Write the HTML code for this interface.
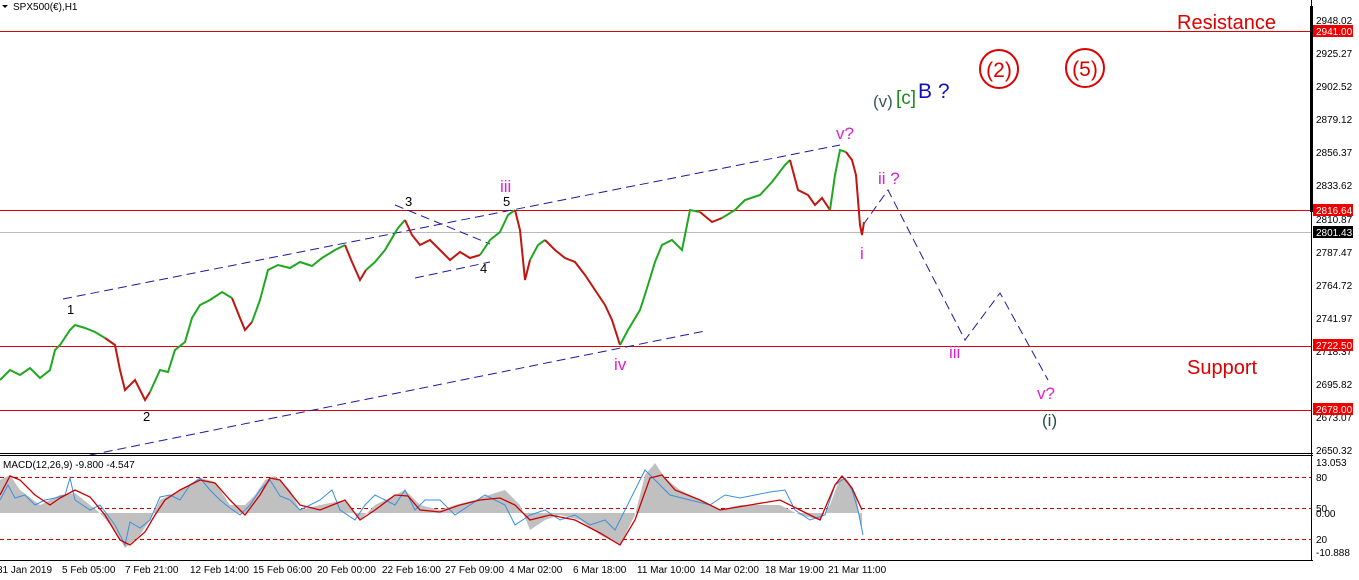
<!DOCTYPE html>
<html><head><meta charset="utf-8"><style>
html,body{margin:0;padding:0;background:#fff;width:1359px;height:580px;overflow:hidden}
svg{display:block;font-family:"Liberation Sans",sans-serif}
.ax{font-size:10px;fill:#000}
</style></head><body>
<svg width="1359" height="580" viewBox="0 0 1359 580">
<rect width="1359" height="580" fill="#fff"/>
<path d="M2 5 L8 5 L5 8 Z" fill="#000"/>
<text x="13" y="10" class="ax">SPX500(€),H1</text>
<line x1="0" y1="31.5" x2="1311" y2="31.5" stroke="#d00" stroke-width="1"/>
<line x1="0" y1="210.5" x2="1311" y2="210.5" stroke="#d00" stroke-width="1"/>
<line x1="0" y1="232.5" x2="1311" y2="232.5" stroke="#bbb" stroke-width="1"/>
<line x1="0" y1="346.5" x2="1311" y2="346.5" stroke="#d00" stroke-width="1"/>
<line x1="0" y1="410.5" x2="1311" y2="410.5" stroke="#d00" stroke-width="1"/>
<g stroke="#1a1aa0" stroke-width="1" stroke-dasharray="9,5" fill="none">
<line x1="63" y1="299" x2="840" y2="145"/>
<line x1="90" y1="455" x2="705" y2="331"/>
<line x1="395" y1="205" x2="490" y2="244"/>
<line x1="415" y1="278" x2="490" y2="262"/>
<polyline points="863,225 888,190 965,340 1000,293 1048,380"/>
</g>
<g fill="none" stroke-width="2">
<polyline stroke="#1fa81f" points="0,380 10,370 20,375 30,368 40,378 50,370 55,350 60,345 70,330 75,325 85,328 95,332 105,338"/>
<polyline stroke="#c0160f" points="105,338 115,345 120,370 125,390 135,380 145,400 150,392"/>
<polyline stroke="#1fa81f" points="150,392 160,370 168,372 175,350 185,342 192,318 200,305 210,300 222,292 232,298"/>
<polyline stroke="#c0160f" points="232,298 240,318 245,330 252,322"/>
<polyline stroke="#1fa81f" points="252,322 260,300 268,270 278,265 290,268 300,262 312,266 322,258 335,250 345,245"/>
<polyline stroke="#c0160f" points="345,245 352,262 360,280 366,270"/>
<polyline stroke="#1fa81f" points="366,270 375,262 385,250 398,228 405,220"/>
<polyline stroke="#c0160f" points="405,220 412,235 420,245 430,240 440,250 450,260 460,252 470,258 480,255"/>
<polyline stroke="#1fa81f" points="480,255 490,240 500,232 508,215 515,210"/>
<polyline stroke="#c0160f" points="515,210 520,230 525,280 530,260"/>
<polyline stroke="#1fa81f" points="530,260 538,245 545,240"/>
<polyline stroke="#c0160f" points="545,240 555,250 565,258 575,262 585,275 595,290 605,305 612,320 620,345"/>
<polyline stroke="#1fa81f" points="620,345 628,330 640,310 648,285 655,262 662,245 672,240 682,250 690,210 700,212"/>
<polyline stroke="#c0160f" points="700,212 712,222 722,218"/>
<polyline stroke="#1fa81f" points="722,218 735,210 745,200 760,195 772,182 785,165 790,160"/>
<polyline stroke="#c0160f" points="790,160 798,190 808,195 815,205 822,198 830,210"/>
<polyline stroke="#1fa81f" points="830,210 835,175 840,150 846,152"/>
<polyline stroke="#c0160f" points="846,152 852,160 856,175 858,200 860,225 862,235 864,222"/>
</g>
<g font-size="13" fill="#000">
<text x="67" y="314">1</text><text x="143" y="421">2</text><text x="405" y="206">3</text><text x="480" y="273">4</text><text x="503" y="206">5</text>
</g>
<g font-size="17" fill="#e020d0">
<text x="500" y="192">iii</text><text x="614" y="370">iv</text><text x="836" y="139">v?</text><text x="878" y="184">ii ?</text><text x="860" y="259">i</text><text x="949" y="358">iii</text><text x="1037" y="399">v?</text>
</g>
<text x="1042" y="426" font-size="17" fill="#2e4a4a">(i)</text>
<text x="873" y="107" font-size="17" fill="#3a5a5a">(v)</text>
<text x="896" y="104" font-size="19" fill="#1a8a1a">[c]</text>
<text x="918" y="98" font-size="21" fill="#1010c0">B ?</text>
<circle cx="999" cy="69" r="19" fill="none" stroke="#d00" stroke-width="2"/>
<text x="999" y="77" font-size="21" fill="#d00" text-anchor="middle">(2)</text>
<circle cx="1085" cy="68" r="19" fill="none" stroke="#d00" stroke-width="2"/>
<text x="1085" y="76" font-size="21" fill="#d00" text-anchor="middle">(5)</text>
<text x="1177" y="29" font-size="20" fill="#d00">Resistance</text>
<text x="1187" y="374" font-size="20" fill="#d00">Support</text>
<line x1="0" y1="453.5" x2="1313" y2="453.5" stroke="#000"/>
<line x1="0" y1="455.5" x2="1313" y2="455.5" stroke="#000"/>
<line x1="0" y1="560.5" x2="1313" y2="560.5" stroke="#000"/>
<line x1="1311.5" y1="0" x2="1311.5" y2="561" stroke="#000"/>
<rect x="1310" y="6" width="3" height="206" fill="#000"/>
<text x="3" y="468" class="ax">MACD(12,26,9) -9.800 -4.547</text>
<g stroke="#c00" stroke-dasharray="4,3" stroke-width="1">
<line x1="0" y1="477.5" x2="1311" y2="477.5"/><line x1="0" y1="508.5" x2="1311" y2="508.5"/><line x1="0" y1="539.5" x2="1311" y2="539.5"/>
</g>
<polygon fill="#c0c0c0" points="0,513 0,480 10,475 20,490 40,505 50,500 60,495 75,493 90,505 100,513 115,530 125,548 140,535 150,520 160,500 180,490 200,478 215,482 230,505 245,505 255,495 265,480 275,476 290,490 300,510 320,505 345,500 360,520 375,505 395,495 405,490 420,505 440,510 455,505 475,500 495,493 505,490 520,505 530,530 545,520 560,515 580,520 600,535 620,545 635,515 645,475 655,463 665,478 680,490 700,500 720,510 740,505 760,505 780,505 800,515 820,520 830,505 840,478 848,480 856,495 862,530 862,513"/>
<polyline fill="none" stroke="#3b8fe0" stroke-width="1" points="0,500 8,485 15,498 25,495 35,505 45,500 55,498 65,495 70,478 75,500 90,510 100,505 115,525 125,545 130,522 140,528 150,520 160,497 170,495 180,500 190,485 200,478 210,490 220,500 230,508 240,515 250,505 260,490 270,480 280,496 290,500 300,510 310,505 320,500 332,490 340,510 355,520 365,505 375,495 385,500 395,505 405,490 415,510 425,500 440,500 455,515 470,505 485,495 495,500 505,505 515,525 530,515 545,510 560,520 575,515 590,525 605,520 615,530 625,510 635,490 645,470 655,480 670,495 690,500 710,505 725,495 740,498 755,495 770,492 785,490 795,510 810,520 825,515 835,485 845,478 852,490 858,510 863,535"/>
<polyline fill="none" stroke="#c00" stroke-width="1.3" points="0,495 10,476 20,480 35,495 50,505 60,498 75,490 90,497 105,515 120,540 130,545 145,532 155,515 165,500 180,490 200,480 215,483 230,500 245,515 260,495 270,478 280,480 300,505 320,510 345,500 360,520 375,510 395,495 408,496 420,510 440,512 460,505 480,500 500,498 515,505 530,520 550,515 575,520 600,533 620,545 635,520 650,478 662,475 675,490 700,500 720,510 750,505 780,500 800,510 820,520 835,485 842,476 852,488 862,510"/>
<g class="ax">
<text x="1316" y="24">2948.02</text><text x="1316" y="57">2925.27</text><text x="1316" y="90">2902.52</text><text x="1316" y="123">2879.12</text><text x="1316" y="156">2856.37</text><text x="1316" y="189">2833.62</text><text x="1316" y="223">2810.87</text><text x="1316" y="256">2787.47</text><text x="1316" y="289">2764.72</text><text x="1316" y="322">2741.97</text><text x="1316" y="355">2718.37</text><text x="1316" y="388">2695.82</text><text x="1316" y="421">2673.07</text><text x="1316" y="454">2650.32</text>
<text x="1316" y="466">13.053</text><text x="1316" y="481">80</text><text x="1316" y="512">50</text><text x="1316" y="517">0.00</text><text x="1316" y="543">20</text><text x="1316" y="556">-10.888</text>
</g>
<rect x="1313" y="25" width="40" height="12" fill="#e00"/><text x="1316" y="35" class="ax" style="fill:#fff">2941.00</text>
<rect x="1313" y="204" width="40" height="12" fill="#e00"/><text x="1316" y="214" class="ax" style="fill:#fff">2816.64</text>
<rect x="1313" y="226" width="40" height="12" fill="#000"/><text x="1316" y="236" class="ax" style="fill:#fff">2801.43</text>
<rect x="1313" y="339" width="40" height="12" fill="#e00"/><text x="1316" y="349" class="ax" style="fill:#fff">2722.50</text>
<rect x="1313" y="403" width="40" height="12" fill="#e00"/><text x="1316" y="413" class="ax" style="fill:#fff">2678.00</text>
<g class="ax">
<text x="-3" y="573">31 Jan 2019</text><text x="62" y="573">5 Feb 05:00</text><text x="125" y="573">7 Feb 21:00</text><text x="190" y="573">12 Feb 14:00</text><text x="253" y="573">15 Feb 06:00</text><text x="317" y="573">20 Feb 00:00</text><text x="382" y="573">22 Feb 16:00</text><text x="445" y="573">27 Feb 09:00</text><text x="509" y="573">4 Mar 02:00</text><text x="573" y="573">6 Mar 18:00</text><text x="637" y="573">11 Mar 10:00</text><text x="700" y="573">14 Mar 02:00</text><text x="765" y="573">18 Mar 19:00</text><text x="828" y="573">21 Mar 11:00</text>
</g>
</svg>
</body></html>
